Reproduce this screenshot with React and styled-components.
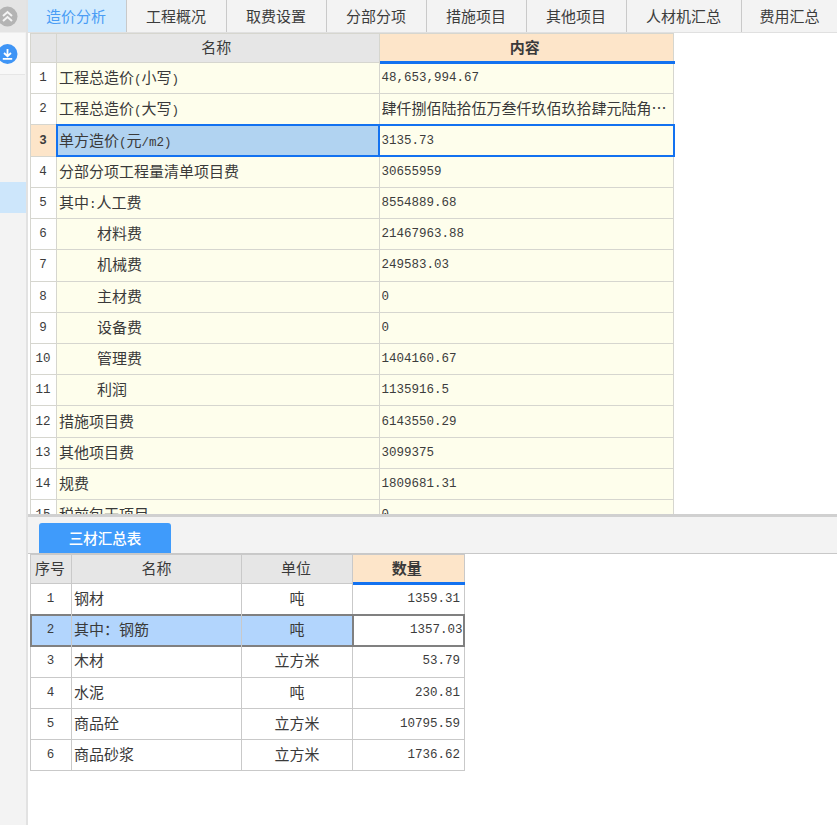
import React from "react";
import styled, { createGlobalStyle } from "styled-components";

const Global = createGlobalStyle`
  html, body { margin: 0; padding: 0; background: #fff; }
  body { font-family: "Noto Sans CJK SC", "Liberation Sans", sans-serif; color: #333; }
  * { box-sizing: border-box; }
`;

const Page = styled.div`
  display: flex;
  width: 837px;
  height: 825px;
  overflow: hidden;
`;

const Sidebar = styled.aside`
  width: 28px;
  flex: none;
  display: flex;
  flex-direction: column;
  background: #f3f3f3;
  border-right: 2px solid #e2e2e2;
`;
const SideTop = styled.div`
  height: 33px;
  background: #e4e4e4;
  display: flex;
  align-items: center;
  border-bottom: 1px solid #eee;
`;
const SideIcon = styled.div`
  height: 42px;
  background: #f8f8f8;
  display: flex;
  align-items: center;
  border-bottom: 1px solid #e6e6e6;
  margin-right: 1px;
`;
const SideSelected = styled.div`
  height: 31px;
  margin-top: 107px;
  background: #cde6fb;
`;

const Main = styled.main`
  flex: 1;
  min-width: 0;
  display: flex;
  flex-direction: column;
`;

const Tabs = styled.nav`
  display: flex;
  height: 33px;
  flex: none;
  background: #f3f3f3;
  border-bottom: 1px solid #e0e0e0;
`;
const Tab = styled.div`
  width: ${(p) => p.$w}px;
  flex: none;
  display: flex;
  align-items: center;
  justify-content: center;
  font-size: 15px;
  line-height: 20px;
  padding: 0 ${(p) => (p.$active ? 2 : 1)}px 1px 0;
  color: ${(p) => (p.$active ? "#4a9df5" : "#3c3c3c")};
  background: ${(p) => (p.$active ? "#d3ebfd" : "#f3f3f3")};
  border-right: 1px solid #c9c9c9;
  &:last-child { border-right: 0; padding-right: 0; }
`;

const TopPane = styled.section`
  height: 481px;
  flex: none;
  overflow: hidden;
  padding-left: 2px;
`;
const Splitter = styled.div`
  height: 3px;
  flex: none;
  background: #d0d0d0;
`;
const BottomBand = styled.div`
  height: 37px;
  flex: none;
  background: #f3f3f3;
  padding: 6px 0 0 11px;
  border-bottom: 1px solid #c8c8c8;
`;
const SheetTab = styled.div`
  width: 132px;
  height: 30px;
  background: #3f9bfb;
  border-radius: 3px 3px 0 0;
  color: #fff;
  font-size: 14.5px;
  font-weight: 500;
  display: flex;
  align-items: center;
  justify-content: center;
  padding: 0 0 2px 0;
`;
const BottomPane = styled.section`
  flex: 1;
  padding-left: 2px;
`;

const Grid = styled.div`
  display: inline-block;
  vertical-align: top;
  border-left: 1px solid ${(p) => p.$line};
  border-top: 1px solid ${(p) => p.$line};
`;
const Row = styled.div`
  display: flex;
  height: ${(p) => p.$h}px;
`;
const Cell = styled.div`
  position: relative;
  width: ${(p) => p.$w}px;
  flex: none;
  height: 100%;
  display: flex;
  align-items: center;
  justify-content: ${(p) => p.$justify || "flex-start"};
  padding: 0 ${(p) => p.$pr || 0}px 0 ${(p) => p.$pl || 0}px;
  font-size: 15px;
  white-space: nowrap;
  color: #3a3a3a;
  background: ${(p) => p.$bg || "#fff"};
  border-right: 1.5px solid ${(p) => p.$line};
  border-bottom: 1.5px solid ${(p) => p.$line};
  font-weight: ${(p) => (p.$bold ? 700 : 400)};
`;
const Label = styled.span`
  display: block;
  min-width: 0;
  margin-bottom: 3px;
`;
const Ring = styled.span`
  position: absolute;
  z-index: 1;
  top: -1.5px;
  bottom: -1.5px;
  left: ${(p) => (p.$openLeft ? "0" : "-1.5px")};
  right: ${(p) => (p.$openRight ? "0" : "-1.5px")};
  border-style: solid;
  border-color: ${(p) => p.$color};
  border-width: 2px ${(p) => (p.$openRight ? 0 : 2)}px 2px ${(p) => (p.$openLeft ? 0 : 2)}px;
  pointer-events: none;
`;
const Mono = styled.span`
  font-family: "Liberation Mono", monospace;
  font-size: 12.5px;
  color: #3c3c3c;
`;
const Ascii = styled.span`
  font-family: "Liberation Mono", monospace;
  font-size: 12.5px;
`;
const Ellipsis = styled(Label)`
  overflow: hidden;
  text-overflow: ellipsis;
  width: 100%;
`;
const HeaderMark = styled.span`
  position: absolute;
  z-index: 1;
  left: 0;
  right: -1.5px;
  bottom: -1.5px;
  height: 2.5px;
  background: #1372f0;
`;

const tabs = [
  ["造价分析", 99, true],
  ["工程概况", 100],
  ["取费设置", 100],
  ["分部分项", 100],
  ["措施项目", 100],
  ["其他项目", 100],
  ["人材机汇总", 115],
  ["费用汇总", 95],
];

const costRows = [
  ["工程总造价(小写)", "48,653,994.67"],
  ["工程总造价(大写)", "肆仟捌佰陆拾伍万叁仟玖佰玖拾肆元陆角柒分", "text"],
  ["单方造价(元/m2)", "3135.73"],
  ["分部分项工程量清单项目费", "30655959"],
  ["其中:人工费", "8554889.68"],
  ["材料费", "21467963.88", null, true],
  ["机械费", "249583.03", null, true],
  ["主材费", "0", null, true],
  ["设备费", "0", null, true],
  ["管理费", "1404160.67", null, true],
  ["利润", "1135916.5", null, true],
  ["措施项目费", "6143550.29"],
  ["其他项目费", "3099375"],
  ["规费", "1809681.31"],
  ["税前包干项目", "0"],
];

const materials = [
  ["钢材", "吨", "1359.31"],
  ["其中:钢筋", "吨", "1357.03"],
  ["木材", "立方米", "53.79"],
  ["水泥", "吨", "230.81"],
  ["商品砼", "立方米", "10795.59"],
  ["商品砂浆", "立方米", "1736.62"],
];

const YELLOW = "#fefeec";
const HEAD = "#e6e6e6";
const PEACH = "#fde5c9";
const LINE_A = "#d6d6cf";
const LINE_B = "#c9c9c9";

function mixed(text) {
  return text.split(/([\x00-\x7f]+)/).map((part, i) =>
    /^[\x00-\x7f]+$/.test(part) ? <Ascii key={i}>{part}</Ascii> : part
  );
}

function CostTable() {
  return (
    <Grid $line={LINE_A}>
      <Row $h={29}>
        <Cell $w={26} $bg={HEAD} $line={LINE_A} />
        <Cell $w={322.500} $bg={HEAD} $line={LINE_A} $justify="center" $pr={3}><Label>名称</Label></Cell>
        <Cell $w={294.500} $bg={PEACH} $line={LINE_A} $justify="center" $pr={3} $bold>
          <Label>内容</Label>
          <HeaderMark />
        </Cell>
      </Row>
      {costRows.map(([name, value, kind, indent], i) => {
        const sel = i === 2;
        return (
          <Row $h={31.23} key={name}>
            <Cell $w={26} $bg={sel ? PEACH : "#fff"} $line={LINE_A} $justify="center" $pr={1} $bold={sel}>
              <Mono>{i + 1}</Mono>
            </Cell>
            <Cell $w={322.500} $bg={sel ? "#b1d3f1" : YELLOW} $line={LINE_A} $pl={indent ? 40 : 2}>
              <Label>{mixed(name)}</Label>
              {sel && <Ring $color="#1372f0" $openRight />}
            </Cell>
            <Cell $w={294.500} $bg={YELLOW} $line={LINE_A} $pl={2} $pr={4}>
              {kind === "text" ? <Ellipsis>{value}</Ellipsis> : <Mono>{value}</Mono>}
              {sel && <Ring $color="#1372f0" />}
            </Cell>
          </Row>
        );
      })}
    </Grid>
  );
}

function MaterialTable() {
  return (
    <Grid $line={LINE_B}>
      <Row $h={29}>
        <Cell $w={41} $bg={HEAD} $line={LINE_B} $justify="center" $pr={2}><Label>序号</Label></Cell>
        <Cell $w={170} $bg={HEAD} $line={LINE_B} $justify="center"><Label>名称</Label></Cell>
        <Cell $w={111} $bg={HEAD} $line={LINE_B} $justify="center" $pr={2}><Label>单位</Label></Cell>
        <Cell $w={111.500} $bg={PEACH} $line={LINE_B} $justify="center" $pr={3} $bold>
          <Label>数量</Label>
          <HeaderMark />
        </Cell>
      </Row>
      {materials.map(([name, unit, qty], i) => {
        const sel = i === 1;
        const bg = sel ? "#b2d5fd" : "#fff";
        return (
          <Row $h={31.2} key={name}>
            <Cell $w={41} $bg={bg} $line={LINE_B} $justify="center" $pr={1}>
              <Mono>{i + 1}</Mono>
              {sel && <Ring $color="#808080" $openRight />}
            </Cell>
            <Cell $w={170} $bg={bg} $line={LINE_B} $pl={2}>
              <Label>{sel ? "其中：钢筋" : name}</Label>
              {sel && <Ring $color="#808080" $openLeft $openRight />}
            </Cell>
            <Cell $w={111} $bg={bg} $line={LINE_B} $justify="center">
              <Label>{unit}</Label>
              {sel && <Ring $color="#808080" $openLeft $openRight />}
            </Cell>
            <Cell $w={111.500} $bg="#fff" $line={LINE_B} $justify="flex-end" $pr={sel ? 1 : 3.500}>
              <Mono>{qty}</Mono>
              {sel && <Ring $color="#808080" />}
            </Cell>
          </Row>
        );
      })}
    </Grid>
  );
}

export default function App() {
  return (
    <Page>
      <Global />
      <Sidebar>
        <SideTop>
          <svg width="18" height="21" viewBox="0 0 18 21">
            <circle cx="7.5" cy="10.500" r="10" fill="#b4b4b4" />
            <path d="M3 10 7.500 6l4.500 4M3 15l4.500-4 4.500 4" fill="none" stroke="#f4f4f4" strokeWidth="2" />
          </svg>
        </SideTop>
        <SideIcon>
          <svg width="18" height="20" viewBox="0 0 18 20">
            <circle cx="7.500" cy="10" r="10" fill="#3f95f6" />
            <path d="M7.500 5v7M4 9l3.500 3.200L11 9M2.800 14.800h9.400" fill="none" stroke="#fff" strokeWidth="1.800" />
          </svg>
        </SideIcon>
        <SideSelected />
      </Sidebar>
      <Main>
        <Tabs>
          {tabs.map(([label, w, active]) => (
            <Tab key={label} $w={w} $active={active}>{label}</Tab>
          ))}
        </Tabs>
        <TopPane>
          <CostTable />
        </TopPane>
        <Splitter />
        <BottomBand>
          <SheetTab>三材汇总表</SheetTab>
        </BottomBand>
        <BottomPane>
          <MaterialTable />
        </BottomPane>
      </Main>
    </Page>
  );
}
